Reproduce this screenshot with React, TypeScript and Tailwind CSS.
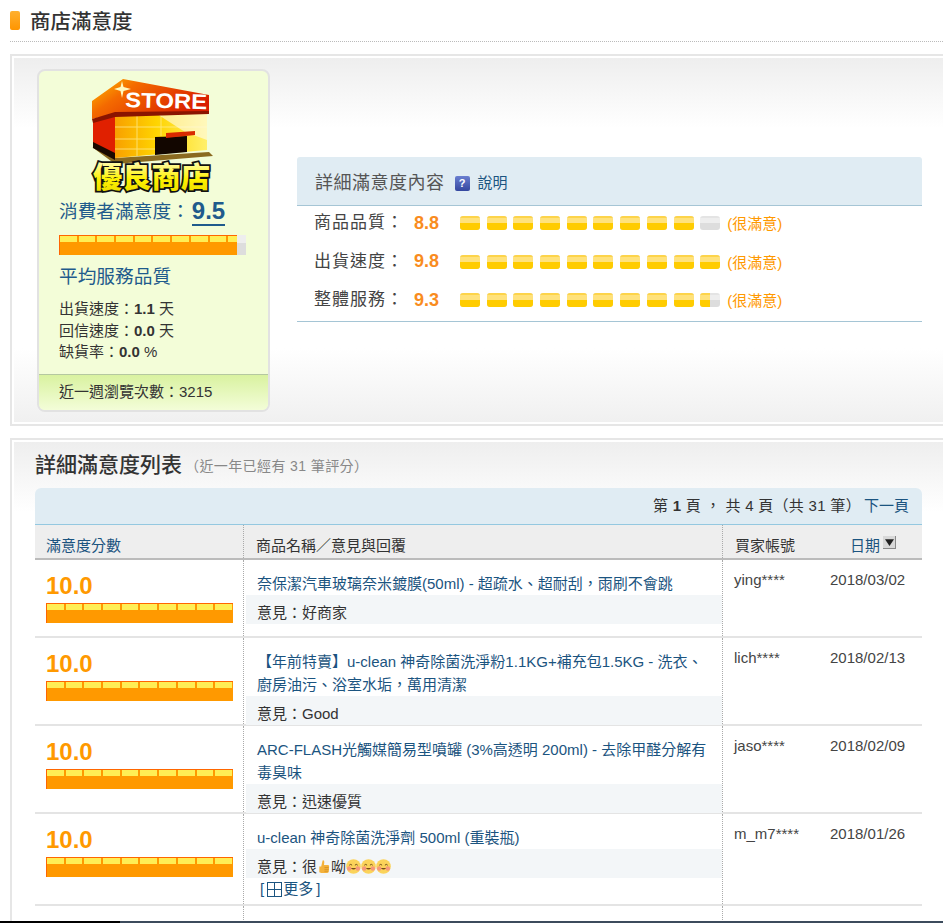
const cjk = "font-['Liberation_Sans','Noto_Sans_CJK_TC',sans-serif]";

const reviews = [
  {
    title: ["奈保潔汽車玻璃奈米鍍膜(50ml) - 超疏水、超耐刮，雨刷不會跳"],
    comment: "好商家",
    user: "ying****",
    date: "2018/03/02",
    rowClass: "h-[78px]",
  },
  {
    title: [
      "【年前特賣】u-clean 神奇除菌洗淨粉1.1KG+補充包1.5KG - 洗衣、",
      "廚房油污、浴室水垢，萬用清潔",
    ],
    comment: "Good",
    user: "lich****",
    date: "2018/02/13",
    rowClass: "h-[88px]",
  },
  {
    title: [
      "ARC-FLASH光觸媒簡易型噴罐 (3%高透明 200ml) - 去除甲醛分解有",
      "毒臭味",
    ],
    comment: "迅速優質",
    user: "jaso****",
    date: "2018/02/09",
    rowClass: "h-[88px]",
  },
];

const Logo = () => (
  <svg width="124" height="122" viewBox="0 0 124 122" className="-mb-[6px] block">
    <defs>
      <linearGradient id="roof" x1="0" y1="0" x2="1" y2="0.5">
        <stop offset="0" stopColor="#ffc000" />
        <stop offset="0.35" stopColor="#f46a00" />
        <stop offset="1" stopColor="#d81e00" />
      </linearGradient>
      <linearGradient id="wall" x1="0" y1="0" x2="1" y2="0">
        <stop offset="0" stopColor="#f8a000" />
        <stop offset="0.45" stopColor="#ffd400" />
        <stop offset="1" stopColor="#fff06a" />
      </linearGradient>
      <linearGradient id="words" x1="0" y1="0" x2="0" y2="1">
        <stop offset="0" stopColor="#ffffff" />
        <stop offset="0.6" stopColor="#fff200" />
        <stop offset="1" stopColor="#e8d800" />
      </linearGradient>
    </defs>
    <path d="M1 69 L24 86 L122 78 L118 74 L24 80 Z" fill="#8a6a20" />
    <path d="M2 42 L24 37 L24 80 L2 68 Z" fill="#e02000" />
    <path d="M2 64 L24 75 L24 82 L2 70 Z" fill="#1a0a00" />
    <path d="M24 37 L116 35 L116 72 L24 80 Z" fill="url(#wall)" />
    <path d="M24 49 H116 M24 61 H64 M24 71 H64 M46 37 V78 M70 37 V58" stroke="#ffef9a" strokeWidth="1" opacity="0.7" />
    <path d="M66 36 L116 35 L116 62 L94 54 Z" fill="#ffffff" opacity="0.55" />
    <path d="M64 59 L96 58 L96 74 L64 77 Z" fill="#120600" />
    <path d="M75 55 L104 53 L104 57 L75 60 Z" fill="#d82a00" />
    <path d="M1 23 L32 1 L118 17 L118 35 L24 36 L1 41 Z" fill="url(#roof)" />
    <path d="M1 41 L24 34 L118 33 L118 36 L24 39 L2 45 Z" fill="#8a1400" />
    <path d="M31 3 L32.5 9 L40 11 L32.5 13 L31 20 L29.5 13 L23 11 L29.5 9 Z" fill="#fff8c0" />
    <text x="34" y="29" fontFamily="Liberation Sans" fontWeight="700" fontSize="21" fill="#fff" textLength="82" lengthAdjust="spacingAndGlyphs" transform="rotate(1.5 34 29)">STORE</text>
    <text x="2" y="110" fontFamily="Noto Sans CJK TC" fontWeight="900" fontSize="29" fill="url(#words)" stroke="#111" strokeWidth="3.5" paintOrder="stroke" textLength="117" lengthAdjust="spacingAndGlyphs">優良商店</text>
  </svg>
);

const RatingBar = ({ score }: { score: number }) => (
  <div className="relative h-5 w-[187px] bg-[linear-gradient(#eee_0_8px,#ddd_8px)]">
    <div
      className="h-full overflow-hidden border-t border-l border-[#f60] bg-[#f90]"
      style={{ width: `${(score / 10) * 187}px` }}
    >
      <div className="flex w-[187px]">
        {Array.from({ length: 10 }).map((_, i) => (
          <span key={i} className="mr-[2px] h-[6px] w-[16.7px] shrink-0 bg-[#ffee55]" />
        ))}
      </div>
    </div>
  </div>
);

const Pill = ({ fill }: { fill: number }) => (
  <span className="relative h-[14px] w-5 overflow-hidden rounded-[3px] bg-[linear-gradient(#e4e4e4_0_2px,#eee_2px_7px,#ddd_7px)]">
    <span
      className="absolute inset-y-0 left-0 bg-[linear-gradient(#fdd44a_0_2px,#ffe27c_2px_7px,#ffcc00_7px)]"
      style={{ width: `${fill * 100}%` }}
    />
  </span>
);

const DetailRow = ({
  label,
  score,
  fills,
}: {
  label: string;
  score: string;
  fills: number[];
}) => (
  <div className="flex h-[34px] items-center">
    <span className="w-[100px] pl-[17px] text-[17px] tracking-[1px] whitespace-nowrap text-[#444]">{label}：</span>
    <span className="ml-[17px] w-[46px] text-[18px] font-bold text-[#f98c1e]">{score}</span>
    <div className="flex gap-[6.7px]">
      {fills.map((f, i) => (
        <Pill key={i} fill={f} />
      ))}
    </div>
    <span className="mt-[3px] ml-[7px] text-[15px] text-[#f90]">(很滿意)</span>
  </div>
);

const Smile = () => (
  <svg width="15" height="15" viewBox="0 0 16 16" className="inline-block align-[-2px]">
    <circle cx="8" cy="8" r="7.8" fill="#fbd35a" />
    <circle cx="3.4" cy="10" r="2.4" fill="#f6987a" />
    <circle cx="12.6" cy="10" r="2.4" fill="#f6987a" />
    <path d="M3.5 6.6 Q5 4.8 6.5 6.6 M9.5 6.6 Q11 4.8 12.5 6.6" stroke="#6b4a1a" strokeWidth="1" fill="none" />
    <path d="M5.2 9.6 Q8 12.8 10.8 9.6 Z" fill="#7a4a1a" />
  </svg>
);

const Thumb = () => (
  <svg width="14" height="15" viewBox="0 0 12 16" className="inline-block align-[-2px]">
    <path d="M1 8 L3 8 L4.5 1.5 Q6.5 1 6.3 3.5 L6 6.5 L10.5 6.5 Q12 7 11.4 8.5 L11.2 13 Q10.8 15 9 15 L3 15 L1 14 Z" fill="#f4b23c" />
    <path d="M6.5 9 H11 M6.5 11 H11 M6.5 13 H10.5" stroke="#c98518" strokeWidth="0.7" />
  </svg>
);

const ProductCell = ({
  title,
  children,
  footer,
}: {
  title: string[];
  children: React.ReactNode;
  footer?: React.ReactNode;
}) => (
  <div className="flex w-[480px] flex-col border-r border-l border-dotted border-[#aaa] pl-[2px]">
    <div className="pt-[12px] pl-[11px] text-[15px] leading-[23px] whitespace-nowrap text-[#1b5480]">
      {title.map((t) => (
        <div key={t}>{t}</div>
      ))}
    </div>
    <div className="h-[29px] bg-[#f3f6f8] pl-[11px] text-[15px] leading-[36px] whitespace-nowrap text-[#333]">
      {children}
    </div>
    {footer}
  </div>
);

const ReviewRow = ({
  title,
  user,
  date,
  rowClass,
  children,
  footer,
}: {
  title: string[];
  user: string;
  date: string;
  rowClass: string;
  children: React.ReactNode;
  footer?: React.ReactNode;
}) => (
  <div className={`flex border-b-2 border-[#e4e4e4] ${rowClass}`}>
    <div className="w-[208px] pt-[11px] pl-[11px]">
      <div className="text-[24px] leading-[30px] font-bold text-[#f90]">10.0</div>
      <div className="mt-[2px]">
        <RatingBar score={10} />
      </div>
    </div>
    <ProductCell title={title} footer={footer}>
      {children}
    </ProductCell>
    <div className="w-[107px] pt-[9px] pl-[11px] text-[15px] text-[#444]">{user}</div>
    <div className="pt-[9px] text-[15px] text-[#444]">{date}</div>
  </div>
);

export default function App() {
  return (
    <div className={`flex h-[923px] w-[943px] flex-col overflow-hidden bg-white ${cjk}`}>
      {/* 標題 */}
      <div className="ml-[10px] flex h-[42px] shrink-0 items-start border-b border-dotted border-[#bbb]">
        <span className="mt-[11px] h-[19px] w-[10px] rounded-[2px] bg-[linear-gradient(#ffb030,#ff9500)]" />
        <h1 className="mt-[8px] ml-[10px] text-[20.5px] leading-[28px] font-medium text-[#333]">商店滿意度</h1>
      </div>

      {/* 滿意度區塊 */}
      <div className="mt-[12px] ml-[10px] flex h-[372px] shrink-0 border-2 border-r-0 border-[#e6e6e6] bg-white p-[2px] pr-0">
        <div className="flex flex-1 bg-[linear-gradient(#eeeeee,#ffffff_70px,#ffffff_290px,#f0f0f0)] pt-[11px] pl-[23px]">
          <div className="flex h-[343px] w-[233px] flex-col overflow-hidden rounded-[8px] border-2 border-[#e2e2e2] bg-[#f3fdd8]">
            <div className="pt-[7px] pl-[52px]">
              <Logo />
            </div>
            <div className="mt-[2px] flex h-[32px] items-center pl-[20px] text-[18.7px] whitespace-nowrap text-[#1f5b8c]">
              消費者滿意度：
              <span className="ml-[2px] border-b-2 border-[#1f5b8c] text-[24px] leading-[26px] font-bold">9.5</span>
            </div>
            <div className="mt-[7px] ml-[20px]">
              <RatingBar score={9.5} />
            </div>
            <div className="mt-[10px] pl-[20px] text-[18.7px] leading-[24px] whitespace-nowrap text-[#1f5b8c]">平均服務品質</div>
            <div className="mt-[9px] pl-[20px] text-[15px] leading-[21.5px] text-[#333]">
              <div>
                出貨速度：<b>1.1</b> 天
              </div>
              <div>
                回信速度：<b>0.0</b> 天
              </div>
              <div>
                缺貨率：<b>0.0</b> %
              </div>
            </div>
            <div className="mt-auto h-[36px] border-t border-[#b5c8a0] bg-[linear-gradient(#d9f2a0,#f3fdd8)] pt-[6px] pl-[20px] text-[15px] leading-[22px] text-[#333]">
              近一週瀏覽次數：3215
            </div>
          </div>

          <div className="mt-[88px] ml-[27px] w-[625px] self-start">
            <div className="flex h-[49px] items-center rounded-t-[3px] border-b border-[#a5c5d5] bg-[#e0ecf3] pt-[4px] pl-[18px]">
              <span className="text-[18px] tracking-[0.5px] text-[#555]">詳細滿意度內容</span>
              <span className="ml-[10px] flex h-[15px] w-[15px] items-center justify-center rounded-[2px] bg-[linear-gradient(#6a7fd0,#34479f)] text-[11px] leading-none font-bold text-white">
                ?
              </span>
              <span className="ml-[8px] text-[15px] text-[#1b5480]">說明</span>
            </div>
            <div className="flex flex-col gap-[4.5px] border-b border-[#a5c5d5] pb-[4px]">
              <DetailRow label="商品品質" score="8.8" fills={[1, 1, 1, 1, 1, 1, 1, 1, 1, 0]} />
              <DetailRow label="出貨速度" score="9.8" fills={[1, 1, 1, 1, 1, 1, 1, 1, 1, 1]} />
              <DetailRow label="整體服務" score="9.3" fills={[1, 1, 1, 1, 1, 1, 1, 1, 1, 0.5]} />
            </div>
          </div>
        </div>
      </div>

      {/* 列表區塊 */}
      <div className="mt-[12px] ml-[10px] min-h-0 flex-1 overflow-hidden border-t-2 border-l-2 border-[#e6e6e6] p-[2px] pr-0">
        <div className="h-full bg-[linear-gradient(#eeeeee,#ffffff_70px)] pl-[21px]">
          <div className="flex h-[46px] items-end pb-[9px]">
            <h2 className="text-[21px] leading-[28px] font-medium whitespace-nowrap text-[#333]">詳細滿意度列表</h2>
            <span className="mb-[2px] ml-[3px] text-[14px] tracking-[0.4px] whitespace-nowrap text-[#888]">（近一年已經有 31 筆評分）</span>
          </div>
          <div className="w-[887px]">
            <div className="flex h-[37px] items-center justify-end rounded-t-[6px] border-b border-[#94c8e0] bg-[#e0ecf3] pr-[13px] text-[15px] text-[#333]">
              <span className="tracking-[0.3px]">
                第 <b>1</b> 頁 ， 共 4 頁（共 31 筆）
              </span>
              <span className="ml-[3px] text-[#1b5480]">下一頁</span>
            </div>
            <div className="flex h-[35px] items-stretch border-b-2 border-[#bbb] bg-[#eee] text-[15px] leading-[20px] text-[#333]">
              <div className="w-[208px] pt-[11px] pl-[11px] text-[#1b5480]">滿意度分數</div>
              <div className="w-[480px] border-r border-l border-dotted border-[#aaa] pt-[11px] pl-[12px]">
                商品名稱／意見與回覆
              </div>
              <div className="w-[127px] pt-[11px] pl-[12px]">買家帳號</div>
              <div className="flex items-start pt-[11px] text-[#1b5480]">
                日期
                <span className="ml-[3px] flex h-[13px] w-[13px] items-center justify-center border-r border-b border-[#888] bg-[#d8d8d8]">
                  <svg width="9" height="9" viewBox="0 0 8 8">
                    <path d="M0 1 H8 L4 7 Z" fill="#222" />
                  </svg>
                </span>
              </div>
            </div>

            {reviews.map((r) => (
              <ReviewRow key={r.user} title={r.title} user={r.user} date={r.date} rowClass={r.rowClass}>
                意見：{r.comment}
              </ReviewRow>
            ))}
            <ReviewRow
              title={["u-clean 神奇除菌洗淨劑 500ml (重裝瓶)"]}
              user="m_m7****"
              date="2018/01/26"
              rowClass="h-[92px]"
              footer={
                <div className="flex items-center pl-[14px] text-[15px] leading-[22px] text-[#1b5480]">
                  [
                  <svg width="15" height="15" viewBox="0 0 15 15" className="mr-[1px] ml-[3px]">
                    <rect x="0.5" y="0.5" width="14" height="14" fill="none" stroke="#1b5480" />
                    <path d="M7.5 1 V14 M1 7.5 H14" stroke="#1b5480" />
                  </svg>
                  更多<span className="ml-[3px]">]</span>
                </div>
              }
            >
              意見：很<Thumb />呦<Smile />
              <Smile />
              <Smile />
            </ReviewRow>
            <div className="flex h-[40px]">
              <div className="w-[208px]" />
              <div className="w-[480px] border-r border-l border-dotted border-[#aaa]" />
            </div>
          </div>
        </div>
      </div>

      <div className="flex h-[2px] shrink-0">
        <div className="w-[120px] bg-black" />
        <div className="flex-1 bg-[#3c4b5c]" />
      </div>
    </div>
  );
}
